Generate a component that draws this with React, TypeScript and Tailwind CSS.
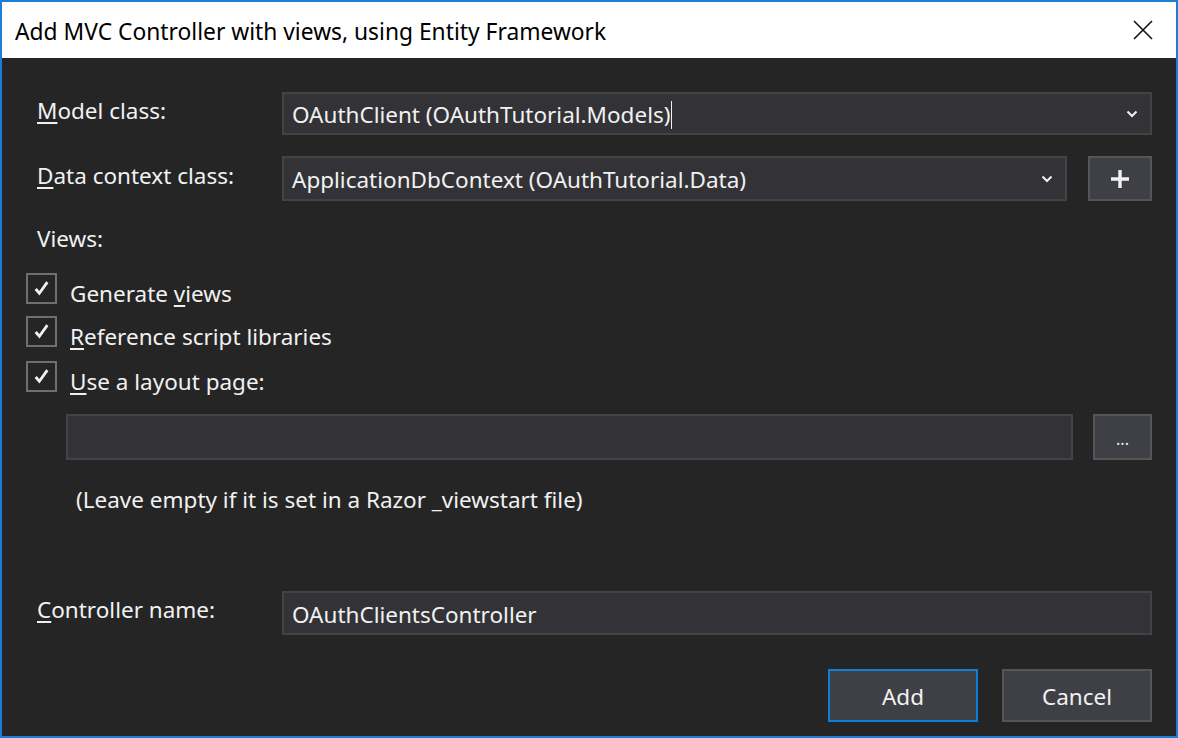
import React from 'react';

const font = { fontFamily: '"Segoe UI", "Noto Sans", "Open Sans", sans-serif' };

function Chevron() {
  return (
    <svg width="12" height="8" viewBox="0 0 12 8" className="shrink-0">
      <polyline points="1.5,1.5 6,6 10.5,1.5" fill="none" stroke="#f1f1f1" strokeWidth="2" />
    </svg>
  );
}

function Check() {
  return (
    <svg width="17" height="17" viewBox="0 0 16 16">
      <polyline points="2.5,8.5 6,12.5 13.5,2" fill="none" stroke="#f1f1f1" strokeWidth="2.6" />
    </svg>
  );
}

function CheckRow({ pre, u, post }: { pre?: string; u: string; post: string }) {
  return (
    <div className="flex items-center h-[31px]">
      <div className="w-[31px] h-[31px] border-2 border-[#6f6f6f] flex items-center justify-center">
        <Check />
      </div>
      <span className="ml-[13px] text-[22.5px] text-[#f1f1f1] leading-none pt-[11px]">
        {pre}
        <u className="underline-offset-[3px]">{u}</u>
        {post}
      </span>
    </div>
  );
}

export default function App() {
  return (
    <div style={font} className="w-[1178px] h-[738px] border-2 border-[#1c7ed6] flex flex-col overflow-hidden">
      <div className="h-[56px] bg-white flex items-center justify-between pl-[13px] pr-[22px] shrink-0">
        <span className="text-[22.8px] text-black pt-[4px]">Add MVC Controller with views, using Entity Framework</span>
        <svg width="22" height="22" viewBox="0 0 22 22">
          <path d="M2 2 L20 20 M20 2 L2 20" stroke="#111" strokeWidth="1.6" />
        </svg>
      </div>
      <div className="flex-1 bg-[#252526] text-[#f1f1f1] text-[22.5px] flex flex-col pl-[24px] pr-[24px]">
        <div className="flex items-center mt-[34px] h-[43px]">
          <span className="w-[256px] pl-[11px] pb-[6px]"><u className="underline-offset-[3px]">M</u>odel class:</span>
          <div className="flex-1 h-full bg-[#333337] border-2 border-[#434346] flex items-center pl-[8px] pr-[12px]">
            <span className="flex-1 flex items-center pt-[3px]">
              OAuthClient (OAuthTutorial.Models)
              <span className="inline-block w-px h-[28px] bg-[#f1f1f1] ml-px" />
            </span>
            <Chevron />
          </div>
        </div>
        <div className="flex items-center mt-[21px] h-[45px]">
          <span className="w-[256px] pl-[11px] pb-[6px]"><u className="underline-offset-[3px]">D</u>ata context class:</span>
          <div className="flex-1 h-full bg-[#333337] border-2 border-[#434346] flex items-center pl-[8px] pr-[12px]">
            <span className="flex-1 pt-[3px]">ApplicationDbContext (OAuthTutorial.Data)</span>
            <Chevron />
          </div>
          <div className="w-[64px] h-full ml-[21px] bg-[#3f3f46] border-2 border-[#555555] flex items-center justify-center">
            <svg width="20" height="20" viewBox="0 0 20 20">
              <path d="M10 1 V19 M1 10 H19" stroke="#f1f1f1" strokeWidth="3.4" />
            </svg>
          </div>
        </div>
        <div className="mt-[26px] h-[24px] flex items-center pl-[11px]">Views:</div>
        <div className="mt-[22px] flex flex-col gap-[12px]">
          <CheckRow pre="Generate " u="v" post="iews" />
          <CheckRow u="R" post="eference script libraries" />
          <div className="mt-[2px]">
            <CheckRow u="U" post="se a layout page:" />
          </div>
        </div>
        <div className="flex mt-[22px] h-[46px] pl-[40px]">
          <div className="flex-1 h-full bg-[#333337] border-2 border-[#434346]" />
          <div className="w-[59px] h-full ml-[20px] bg-[#3f3f46] border-2 border-[#555555] flex items-center justify-center pt-[4px] text-[16px] leading-none">
            ...
          </div>
        </div>
        <div className="mt-[24px] pl-[50px] h-[30px] flex items-center pt-[2px]">(Leave empty if it is set in a Razor _viewstart file)</div>
        <div className="flex items-center mt-[77px] h-[44px]">
          <span className="w-[256px] pl-[11px] pb-[6px]"><u className="underline-offset-[3px]">C</u>ontroller name:</span>
          <div className="flex-1 h-full bg-[#333337] border-2 border-[#434346] flex items-center pl-[8px] pt-[3px]">
            OAuthClientsController
          </div>
        </div>
        <div className="flex justify-end gap-[24px] mt-[34px]">
          <div className="w-[150px] h-[53px] bg-[#3f3f46] border-2 border-[#0e7fd8] flex items-center justify-center pt-[3px]">Add</div>
          <div className="w-[150px] h-[53px] bg-[#3f3f46] border-2 border-[#555555] flex items-center justify-center pt-[3px]">Cancel</div>
        </div>
      </div>
    </div>
  );
}
